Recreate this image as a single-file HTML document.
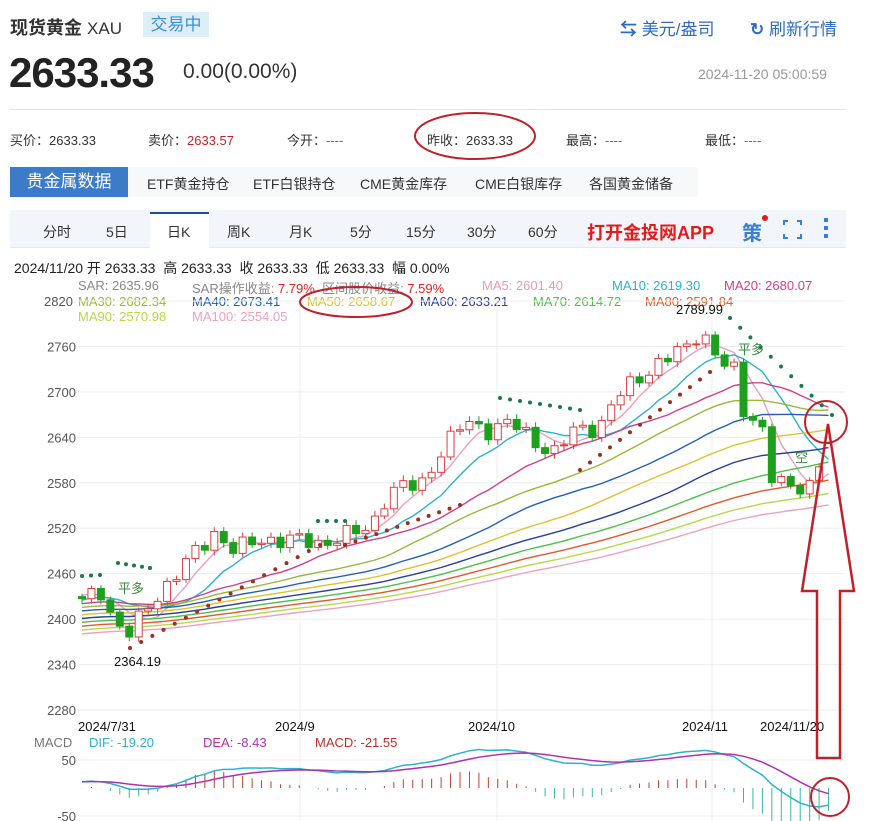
<!DOCTYPE html>
<html><head><meta charset="utf-8">
<style>
*{margin:0;padding:0;box-sizing:border-box}
body{width:870px;height:821px;overflow:hidden;background:#fff;font-family:"Liberation Sans","Noto Sans CJK SC",sans-serif;color:#333;position:relative}
.a{position:absolute;white-space:nowrap}
</style></head><body>
<div class="a" style="left:10px;top:14px;font-size:18px;font-weight:bold;color:#333">现货黄金 <span style="font-weight:normal;font-size:17px">XAU</span></div>
<div class="a" style="left:143px;top:12px;width:66px;height:25px;background:#ddeef9;color:#3b8fd8;font-size:17px;line-height:25px;text-align:center">交易中</div>
<div class="a" style="left:620px;top:15px;font-size:17px;color:#2d6cc0"><span style="font-weight:bold">⇆</span> 美元/盎司</div>
<div class="a" style="left:750px;top:15px;font-size:17px;color:#2d6cc0"><span style="font-weight:bold">↻</span> 刷新行情</div>
<div class="a" style="left:9px;top:49px;font-size:42px;font-weight:bold;color:#222;letter-spacing:-1px">2633.33</div>
<div class="a" style="left:183px;top:60px;font-size:21px;color:#333">0.00(0.00%)</div>
<div class="a" style="left:698px;top:66px;font-size:14px;color:#999">2024-11-20 05:00:59</div>
<div class="a" style="left:10px;top:109px;width:836px;height:1px;background:#e5e5e5"></div>
<div class="a" style="left:10px;top:130px;font-size:13px">买价：2633.33</div>
<div class="a" style="left:148px;top:130px;font-size:13px">卖价：<span style="color:#c8202a">2633.57</span></div>
<div class="a" style="left:287px;top:130px;font-size:13px">今开：<span style="color:#2a9a2a">----</span></div>
<div class="a" style="left:427px;top:130px;font-size:13px">昨收：2633.33</div>
<div class="a" style="left:566px;top:130px;font-size:13px">最高：<span style="color:#2a9a2a">----</span></div>
<div class="a" style="left:705px;top:130px;font-size:13px">最低：<span style="color:#2a9a2a">----</span></div>
<div class="a" style="left:10px;top:167px;width:118px;height:30px;background:#3b7bc8;color:#fff;font-size:17px;line-height:30px;text-align:center">贵金属数据</div>
<div class="a" style="left:128px;top:167px;width:570px;height:30px;background:#f7f8fa"></div>
<div class="a" style="left:147px;top:174px;font-size:14px">ETF黄金持仓</div>
<div class="a" style="left:253px;top:174px;font-size:14px">ETF白银持仓</div>
<div class="a" style="left:360px;top:174px;font-size:14px">CME黄金库存</div>
<div class="a" style="left:475px;top:174px;font-size:14px">CME白银库存</div>
<div class="a" style="left:589px;top:174px;font-size:14px">各国黄金储备</div>
<div class="a" style="left:10px;top:210px;width:836px;height:38px;background:#f2f6fb;border-bottom:1px solid #e3e8ef"></div>
<div class="a" style="left:150px;top:212px;width:59px;height:36px;background:#fff;border-top:2px solid #1f4e8c"></div>
<div class="a" style="left:43px;top:222px;font-size:14px">分时</div>
<div class="a" style="left:106px;top:222px;font-size:14px">5日</div>
<div class="a" style="left:167px;top:222px;font-size:14px">日K</div>
<div class="a" style="left:227px;top:222px;font-size:14px">周K</div>
<div class="a" style="left:289px;top:222px;font-size:14px">月K</div>
<div class="a" style="left:350px;top:222px;font-size:14px">5分</div>
<div class="a" style="left:406px;top:222px;font-size:14px">15分</div>
<div class="a" style="left:467px;top:222px;font-size:14px">30分</div>
<div class="a" style="left:528px;top:222px;font-size:14px">60分</div>
<div class="a" style="left:587px;top:219px;font-size:18px;font-weight:bold;color:#e31a1a">打开金投网APP</div>
<div class="a" style="left:742px;top:217px;font-size:20px;font-weight:bold;color:#3a7fd0">策</div>
<div class="a" style="left:762px;top:215px;width:6px;height:6px;border-radius:3px;background:#e31a1a"></div>
<div class="a" style="left:783px;top:220px;width:19px;height:19px;border:2px solid #3a7fd0"></div>
<div class="a" style="left:788px;top:218px;width:9px;height:23px;background:#f2f6fb"></div>
<div class="a" style="left:781px;top:225px;width:23px;height:9px;background:#f2f6fb"></div>
<div class="a" style="left:824px;top:218px;width:4px;height:4px;background:#3a7fd0;box-shadow:0 8px 0 #3a7fd0,0 16px 0 #3a7fd0"></div>
<div class="a" style="left:14px;top:258px;font-size:14px;color:#222">2024/11/20 开 2633.33 &nbsp;高 2633.33 &nbsp;收 2633.33 &nbsp;低 2633.33 &nbsp;幅 0.00%</div>
<div class="a" style="font-size:13px;left:78px;top:278px;color:#888">SAR: 2635.96</div>
<div class="a" style="font-size:13px;left:192px;top:278px;color:#888">SAR操作收益: <span style="color:#d22">7.79%</span> &nbsp;区间股价收益: <span style="color:#d22">7.59%</span></div>
<div class="a" style="font-size:13px;left:482px;top:278px;color:#e89ab8">MA5: 2601.40</div>
<div class="a" style="font-size:13px;left:612px;top:278px;color:#2bb2cc">MA10: 2619.30</div>
<div class="a" style="font-size:13px;left:724px;top:278px;color:#d0408a">MA20: 2680.07</div>
<div class="a" style="font-size:13px;left:44px;top:294px;color:#555">2820</div>
<div class="a" style="font-size:13px;left:78px;top:294px;color:#9ab83a">MA30: 2682.34</div>
<div class="a" style="font-size:13px;left:192px;top:294px;color:#2460b8">MA40: 2673.41</div>
<div class="a" style="font-size:13px;left:307px;top:294px;color:#e0c030">MA50: 2658.67</div>
<div class="a" style="font-size:13px;left:420px;top:294px;color:#2a3f9e">MA60: 2633.21</div>
<div class="a" style="font-size:13px;left:533px;top:294px;color:#4cc04c">MA70: 2614.72</div>
<div class="a" style="font-size:13px;left:645px;top:294px;color:#e05a2a">MA80: 2591.84</div>
<div class="a" style="font-size:13px;left:78px;top:309px;color:#b8d84a">MA90: 2570.98</div>
<div class="a" style="font-size:13px;left:192px;top:309px;color:#eea0c0">MA100: 2554.05</div>
<div class="a" style="font-size:13px;left:34px;top:735px;color:#777">MACD</div>
<div class="a" style="font-size:13px;left:89px;top:735px;color:#2bb2cc">DIF: -19.20</div>
<div class="a" style="font-size:13px;left:203px;top:735px;color:#b030b0">DEA: -8.43</div>
<div class="a" style="font-size:13px;left:315px;top:735px;color:#c0302a">MACD: -21.55</div>
<svg class="a" style="left:0;top:0" width="870" height="821" id="s" xmlns="http://www.w3.org/2000/svg"></svg>
<script>
var s=document.getElementById('s'),h='';
function Y(p){return 301+(2820-p)*0.7574}
[2820,2760,2700,2640,2580,2520,2460,2400,2340,2280].forEach(function(v){var y=Y(v);h+='<line x1="78" x2="845" y1="'+y+'" y2="'+y+'" stroke="#eee"/>';if(v!=2820)h+='<text x="76" y="'+(y+5)+'" font-size="13" fill="#555" text-anchor="end" font-family="Liberation Sans">'+v+'</text>'});
[300,497,712].forEach(function(x){h+='<line x1="'+x+'" x2="'+x+'" y1="301" y2="821" stroke="#eee"/>'});
h+='<line x1="78" x2="845" y1="760" y2="760" stroke="#eee"/><line x1="78" x2="845" y1="816" y2="816" stroke="#eee"/>';
h+='<text x="76" y="765" font-size="13" fill="#555" text-anchor="end" font-family="Liberation Sans">50</text><text x="76" y="821" font-size="13" fill="#555" text-anchor="end" font-family="Liberation Sans">-50</text>';
[[78,'2024/7/31'],[275,'2024/9'],[468,'2024/10'],[682,'2024/11'],[760,'2024/11/20']].forEach(function(d){h+='<text x="'+d[0]+'" y="731" font-size="13" fill="#111" font-family="Liberation Sans">'+d[1]+'</text>'});
var K=[[80,2420],[100,2440],[115,2395],[130,2380],[150,2420],[170,2450],[190,2480],[215,2515],[235,2490],[260,2505],[290,2505],[320,2500],[345,2510],[370,2520],[385,2560],[400,2575],[420,2575],[440,2620],[465,2660],[490,2650],[510,2660],[540,2630],[555,2620],[575,2650],[600,2655],[615,2690],[640,2720],[660,2740],[690,2760],[700,2785],[720,2740],[735,2725],[745,2665],[760,2670],[770,2590],[790,2570],[810,2580],[828,2633]];
function interp(x){for(var i=0;i<K.length-1;i++){if(x<=K[i+1][0]){var t=(x-K[i][0])/(K[i+1][0]-K[i][0]);return K[i][1]+t*(K[i+1][1]-K[i][1])}}return K[K.length-1][1]}
var N=80,st=9.45,x0=82,C=[];
for(var i=0;i<140;i++){C.push(2290+i*1.0+8*Math.sin(i*0.7))}
var hist=C.length;
for(var i=0;i<N;i++){var x=x0+i*st;C.push(interp(x)+9*Math.sin(i*2.3)+5*Math.cos(i*1.1))}
C[C.length-1]=2633.33;
function ma(n,i){var t=0;for(var j=i-n+1;j<=i;j++)t+=C[j];return t/n}
var M=[[5,'#eaa0c0'],[10,'#2bb2cc'],[20,'#d0408a'],[30,'#9ab83a'],[40,'#2460b8'],[50,'#e0c030'],[60,'#2a3f9e'],[70,'#4cc04c'],[80,'#e05a2a'],[90,'#b8d84a'],[100,'#eea0c0']];
M.forEach(function(m){var p='';for(var i=0;i<N;i++){p+=(i?'L':'M')+(x0+i*st).toFixed(1)+','+Y(ma(m[0],hist+i)).toFixed(1)}h+='<path d="'+p+'" fill="none" stroke="'+m[1]+'" stroke-width="1.4"/>'});
for(var i=0;i<N;i++){var c=C[hist+i],o=C[hist+i-1],x=x0+i*st,hi=Math.max(c,o)+4+3*Math.abs(Math.sin(i*3.1)),lo=Math.min(c,o)-4-3*Math.abs(Math.cos(i*2.7));if(i==N-1){o=c;hi=c;lo=c}
var up=c>=o,col=up?'#d84040':'#1ea01e',yt=Y(Math.max(c,o)),yb=Y(Math.min(c,o));if(yb-yt<1)yb=yt+1;
h+='<line x1="'+x+'" x2="'+x+'" y1="'+Y(hi)+'" y2="'+Y(lo)+'" stroke="'+col+'"/>';
h+='<rect x="'+(x-3.5)+'" y="'+yt+'" width="7" height="'+(yb-yt)+'" fill="'+(up?'#fff':col)+'" stroke="'+col+'"/>'}
function dots(a,b,n,col){for(var k=0;k<n;k++){var t=k/(n-1);h+='<circle cx="'+(a[0]+t*(b[0]-a[0]))+'" cy="'+(a[1]+t*(b[1]-a[1])-(a.length>2?a[2]*Math.sin(Math.PI*t):0))+'" r="2" fill="'+col+'"/>'}}
dots([82,576],[100,575],3,'#1a7a4a');dots([118,563],[150,568],5,'#1a7a4a');
dots([130,648],[320,545,-20],18,'#9a3020');dots([318,521],[345,521],4,'#1a7a4a');
dots([345,545],[460,505,-25],12,'#9a3020');dots([500,398],[580,410],9,'#1a7a4a');
dots([580,470],[710,372,-15],14,'#9a3020');dots([730,318],[832,415,-20],11,'#1a7a4a');
h+='<text x="118" y="593" font-size="13" fill="#3a8a3a" font-family="Noto Sans CJK SC">平多</text><text x="738" y="354" font-size="13" fill="#3a8a3a" font-family="Noto Sans CJK SC">平多</text><text x="795" y="462" font-size="13" fill="#3a8a3a" font-family="Noto Sans CJK SC">空</text>';
h+='<text x="114" y="666" font-size="13" fill="#111" font-family="Liberation Sans">2364.19</text><text x="676" y="314" font-size="13" fill="#111" font-family="Liberation Sans">2789.99</text>';
function ema(arr,n){var k=2/(n+1),r=[arr[0]];for(var i=1;i<arr.length;i++)r.push(arr[i]*k+r[i-1]*(1-k));return r}
var e1=ema(C,12),e2=ema(C,26),dif=C.map(function(_,i){return e1[i]-e2[i]}),dea=ema(dif,9);
function MY(v){return 788-v*0.85}
var pd='',pe='';for(var i=0;i<N;i++){var x=x0+i*st,j=hist+i,d=dif[j],e=dea[j],m=2*(d-e);pd+=(i?'L':'M')+x+','+MY(d);pe+=(i?'L':'M')+x+','+MY(e);h+='<line x1="'+x+'" x2="'+x+'" y1="788" y2="'+Math.min(821,MY(m))+'" stroke="'+(m>=0?'#c0402a':'#3ab8a0')+'"/>'}
h+='<path d="'+pd+'" fill="none" stroke="#2bb2cc" stroke-width="1.5"/><path d="'+pe+'" fill="none" stroke="#b030b0" stroke-width="1.5"/>';
h+='<ellipse cx="475" cy="136" rx="60" ry="23" fill="none" stroke="#c0202a" stroke-width="2"/>';
h+='<ellipse cx="356" cy="302" rx="56" ry="15" fill="none" stroke="#c0202a" stroke-width="2"/>';
h+='<circle cx="826" cy="422" r="21" fill="none" stroke="#c0202a" stroke-width="2"/>';
h+='<circle cx="830" cy="797" r="19" fill="none" stroke="#c0202a" stroke-width="2"/>';
h+='<path d="M828,424 L854,591 L840,591 L840,758 L817,758 L817,591 L802,591 Z" fill="none" stroke="#c0202a" stroke-width="2.5"/>';
s.innerHTML=h;
</script>
</body></html>
